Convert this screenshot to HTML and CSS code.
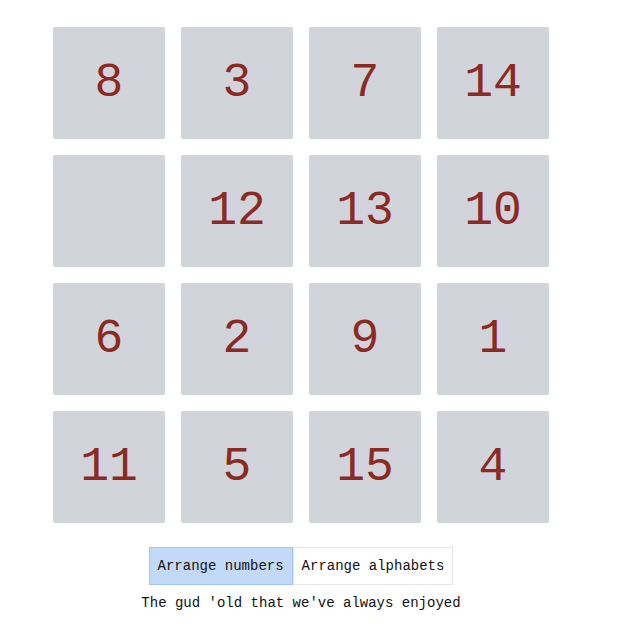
FILE: index.html
```html
<!DOCTYPE html>
<html>
<head>
<meta charset="utf-8">
<link rel="stylesheet" href="styles.css">
</head>
<body>
<div class="page">
  <div class="board">
    <div class="tile">8</div>
    <div class="tile">3</div>
    <div class="tile">7</div>
    <div class="tile">14</div>
    <div class="tile"></div>
    <div class="tile">12</div>
    <div class="tile">13</div>
    <div class="tile">10</div>
    <div class="tile">6</div>
    <div class="tile">2</div>
    <div class="tile">9</div>
    <div class="tile">1</div>
    <div class="tile">11</div>
    <div class="tile">5</div>
    <div class="tile">15</div>
    <div class="tile">4</div>
  </div>
  <div class="modes">
    <button class="mode active">Arrange numbers</button>
    <button class="mode">Arrange alphabets</button>
  </div>
  <p class="caption">The gud 'old that we've always enjoyed</p>
</div>
</body>
</html>
```
FILE: styles.css
```css
html, body {
  margin: 0;
  padding: 0;
  background: #ffffff;
}
body {
  font-family: "Liberation Mono", "DejaVu Sans Mono", monospace;
  color: #111111;
}
.page {
  width: 602px;
  display: flex;
  flex-direction: column;
  align-items: center;
  padding-top: 27px;
}
.board {
  display: grid;
  grid-template-columns: repeat(4, 112px);
  grid-auto-rows: 112px;
  gap: 16px;
}
.tile {
  background: #d1d5db;
  border-radius: 2px;
  display: flex;
  align-items: center;
  justify-content: center;
  font-size: 48px;
  line-height: 1;
  color: #8b2923;
}
.modes {
  display: flex;
  margin-top: 24px;
}
.mode {
  font-family: "Liberation Mono", "DejaVu Sans Mono", monospace;
  font-size: 14px;
  line-height: 20px;
  padding: 8px;
  margin: 0;
  background: #ffffff;
  border: 1px solid #e5e7eb;
  color: #111111;
  border-radius: 0;
}
.mode.active {
  background: #c3d9f8;
  border-color: #a2c5f3;
}
.caption {
  margin: 8px 0 0;
  font-size: 14px;
  line-height: 20px;
  color: #111111;
}
```
